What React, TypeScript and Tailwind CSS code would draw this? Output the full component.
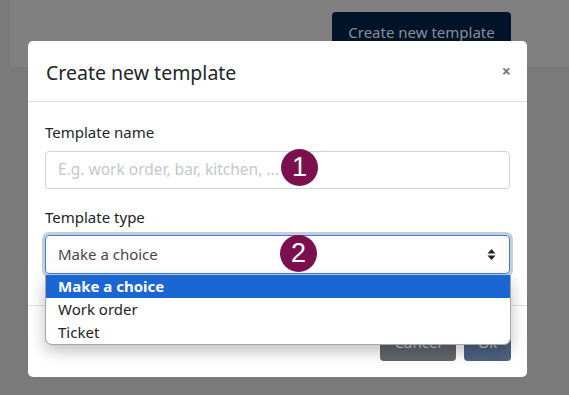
import React from 'react';

const font = { fontFamily: '"Noto Sans", "Open Sans", sans-serif' };

const Badge: React.FC<{ n: number; className: string }> = ({ n, className }) => (
    <div className={`absolute w-[37px] h-[37px] rounded-full bg-[#7c0f4d] text-white text-[27px] leading-none flex items-center justify-center ${className}`}
        style={{ fontFamily: '"Liberation Sans", Arial, sans-serif' }}>
        {n}
    </div>
);

const App: React.FC = () => {
    return (
        <div className="relative w-[569px] h-[395px] bg-[#7a7a7a] overflow-hidden" style={font}>
            {/* Page card behind overlay */}
            <div className="absolute left-[8px] top-[-10px] w-[600px] h-[78px] rounded-[6px] bg-[#808080] border border-[#767676]">
                <div className="absolute left-[323px] top-[21px] w-[179px] h-[40px] rounded-[4px] bg-[#011329] text-[#8a8f96] text-[15px] pt-[9px] text-center">
                    Create new template
                </div>
            </div>

            {/* Modal */}
            <div className="absolute left-[28px] top-[41px] w-[499px] h-[336px] bg-white rounded-[5px] flex flex-col">
                <div className="h-[61px] border-b border-[#dee2e6] flex items-center justify-between pl-[18px] pr-[16px]">
                    <h2 className="text-[19.5px] text-[#212529] pt-[3px]">Create new template</h2>
                    <span className="text-[#777] text-[16px] font-bold leading-none">×</span>
                </div>
                <div className="flex-1 px-[17px] pt-[19px] relative">
                    <div className="text-[15px] text-[#212529] leading-[22px]">Template name</div>
                    <div className="relative mt-[8px] h-[38px] border border-[#ced4da] rounded-[4px] flex items-center pl-[12px] text-[15.5px] text-[#c4c8cc]">
                        E.g. work order, bar, kitchen, ...
                        <Badge n={1} className="left-[235px] top-[-3px]" />
                    </div>
                    <div className="text-[15px] text-[#212529] leading-[22px] mt-[17px]">Template type</div>
                    <div className="relative mt-[7px] h-[39px] border border-[#3b7de0] rounded-[4px] ring-[3px] ring-[#c9ced6] flex items-center justify-between pl-[12px] pr-[13px] text-[15px] text-[#44494f]">
                        <span>Make a choice</span>
                        <svg width="9" height="13" viewBox="0 0 9 13">
                            <path d="M4.5 1 L8.5 5.5 H0.5 Z M4.5 12 L8.5 7.5 H0.5 Z" fill="#222" />
                        </svg>
                        <Badge n={2} className="left-[234px] top-[-1px]" />
                    </div>

                    {/* Open dropdown list */}
                    <div className="absolute left-[17px] top-[173px] w-[466px] h-[70px] bg-white border border-[#a6a6a6] border-t-0 rounded-b-[7px] shadow-[0_6px_16px_rgba(0,0,0,0.25)] overflow-hidden z-10 text-[15px] text-[#222]">
                        <div className="h-[23px] bg-[#1a67d4] text-white font-bold pl-[12px] leading-[23px]">Make a choice</div>
                        <div className="h-[23px] pl-[12px] leading-[23px]">Work order</div>
                        <div className="h-[23px] pl-[12px] leading-[22px]">Ticket</div>
                    </div>
                </div>
                <div className="h-[72px] border-t border-[#dee2e6] flex items-center justify-end gap-[8px] pr-[16px] pt-[2px]">
                    <button className="h-[37px] w-[76px] rounded-[4px] bg-[#62676d] text-[#c9cbce] text-[15px]">Cancel</button>
                    <button className="h-[37px] w-[47px] rounded-[4px] bg-[#4d6282] text-[#c9cbce] text-[15px]">Ok</button>
                </div>
            </div>
        </div>
    );
};

export default App;
